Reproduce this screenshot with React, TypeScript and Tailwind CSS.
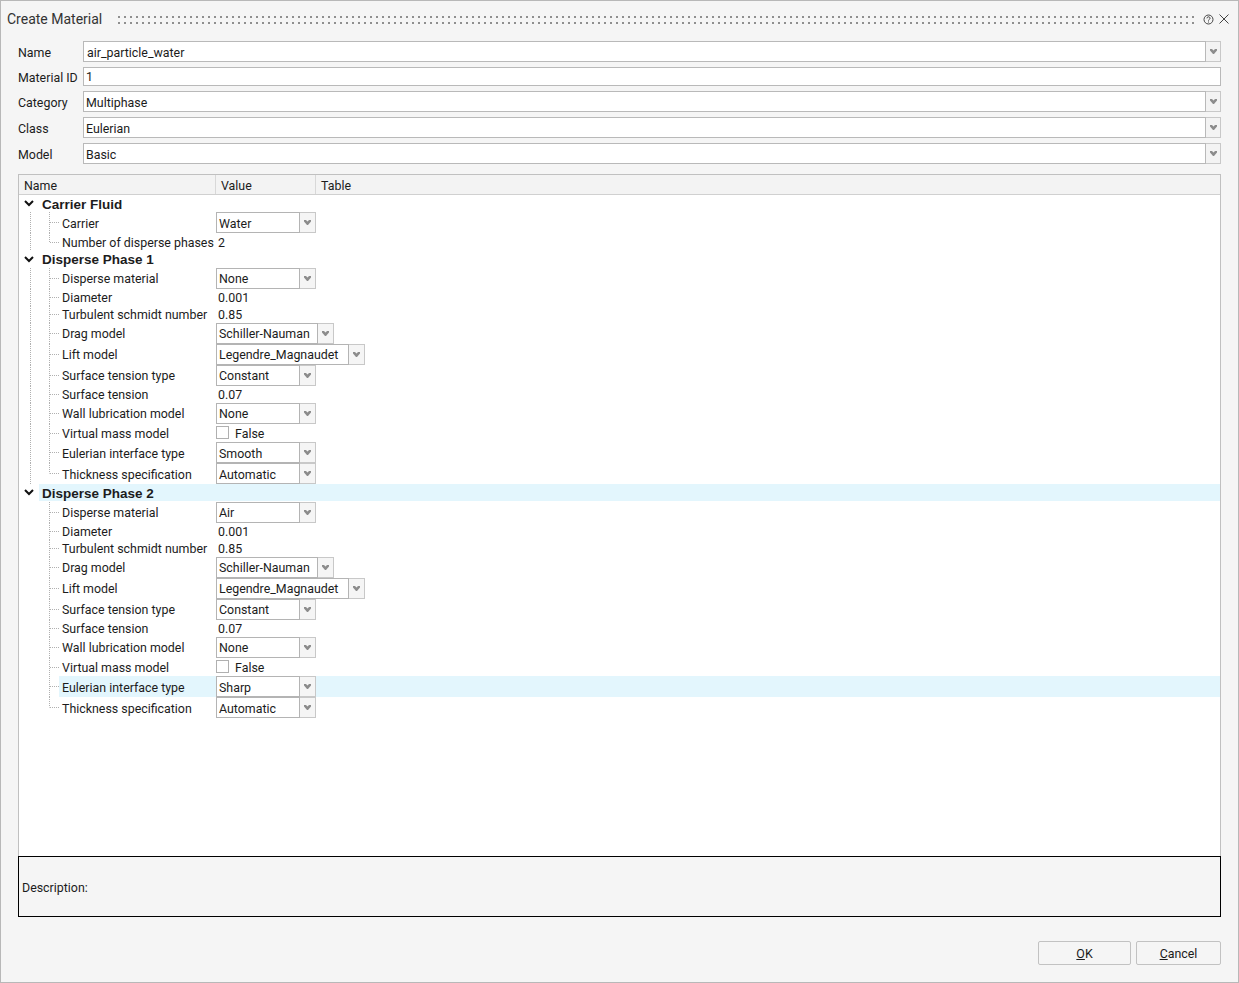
import React from "react";

const font = "font-['Roboto','Liberation_Sans',sans-serif]";

function Arrow() {
  return (
    <svg width="7" height="5" viewBox="0 0 7 5" className="block">
      <path d="M0 0h2l1.5 1.5L5 0h2v1.5L4 5H3L0 1.5z" fill="#8c8c8c" />
    </svg>
  );
}

function FieldCombo({ value, mono }: { value: string; mono?: boolean }) {
  return (
    <div className="flex h-[21px]">
      <div className={`flex-1 border border-[#b9b9b9] bg-white flex items-center pt-[3px] ${mono ? "pl-[3px]" : "pl-[2px]"}`}>{value}</div>
      <div className="w-[15px] border border-l-0 border-[#c8c8c8] bg-[#f3f3f3] flex items-center justify-center"><Arrow /></div>
    </div>
  );
}

function Field({ label, children, className }: { label: string; children: React.ReactNode; className?: string }) {
  return (
    <div className={`flex items-center ${className ?? ""}`}>
      <div className="w-[65px] shrink-0 whitespace-nowrap pt-[3px]">{label}</div>
      <div className="flex-1">{children}</div>
    </div>
  );
}

function Combo({ value, w, nudge }: { value: string; w: number; nudge?: boolean }) {
  return (
    <div className="flex h-[21px]" style={{ width: w }}>
      <div className={`flex-1 border border-[#b4b4b4] bg-white flex items-center pl-[2px] whitespace-nowrap ${nudge ? "pt-[4px]" : "pt-[2px]"}`}>{value}</div>
      <div className="w-[16px] border border-l-0 border-[#c8c8c8] bg-[#f5f5f5] flex items-center justify-center"><Arrow /></div>
    </div>
  );
}

function Chevron() {
  return (
    <svg width="10" height="7" viewBox="0 0 10 7" className="block">
      <path d="M1 1l4 4 4-4" fill="none" stroke="#111" strokeWidth="2" />
    </svg>
  );
}

function Dots({ d }: { d: string }) {
  return <path d={d} stroke="#b0b0b0" strokeWidth="1" strokeDasharray="1 1" fill="none" />;
}

type RowDef =
  | { t: "group"; label: string; hl?: boolean; h?: number; nudge?: boolean }
  | { t: "combo"; label: string; value: string; w?: number; hl?: boolean; spine?: boolean; last?: boolean; nudge?: boolean }
  | { t: "text"; label: string; value: string; h?: number; spine?: boolean; last?: boolean }
  | { t: "check"; label: string; value: string; spine?: boolean; last?: boolean };

function Connector({ h, spine, last }: { h: number; spine?: boolean; last?: boolean }) {
  const mid = Math.floor(h / 2) + 0.5;
  return (
    <svg width="40" height={h} className="block shrink-0">
      {spine && <Dots d={`M11.5 0V${h}`} />}
      <Dots d={`M30.5 0V${last ? mid : h}`} />
      <Dots d={`M31 ${mid}H40`} />
    </svg>
  );
}

function Row({ r }: { r: RowDef }) {
  if (r.t === "group") {
    return (
      <div className="flex items-start" style={{ height: r.h ?? 17 }}>
        <div className="w-[20px] h-[17px] shrink-0 flex justify-end items-center pr-[5px]"><Chevron /></div>
        <div className={`flex-1 h-[17px] flex items-center pl-[3px] font-['Liberation_Sans',sans-serif] font-bold text-[13.5px] ${r.nudge ? "pt-[2px]" : ""} ${r.hl ? "bg-[#e3f6fd]" : ""}`}>{r.label}</div>
      </div>
    );
  }
  const h = r.t === "combo" ? 21 : r.t === "check" ? 18 : r.h ?? 17;
  const hl = r.t === "combo" && r.hl;
  const nudge = r.t === "combo" && r.nudge;
  return (
    <div className="flex items-center" style={{ height: h }}>
      <Connector h={h} spine={r.spine} last={r.last} />
      <div className={`flex flex-1 h-full items-center ${hl ? "bg-[#e3f6fd]" : ""}`}>
        <div className={`w-[157px] shrink-0 pl-[3px] whitespace-nowrap ${nudge ? "pt-[4px]" : "pt-[2px]"}`}>{r.label}</div>
        {r.t === "combo" && <Combo value={r.value} w={r.w ?? 100} nudge={nudge} />}
        {r.t === "text" && <div className="pl-[2px] pt-[2px]">{r.value}</div>}
        {r.t === "check" && (
          <div className="flex items-center">
            <div className="w-[13px] h-[13px] border border-[#b0b0b0] bg-white mb-[2px]" />
            <div className="ml-[6px] pt-[2px]">{r.value}</div>
          </div>
        )}
      </div>
    </div>
  );
}

function phase(hl: boolean, spine: boolean, first: string, type: string): RowDef[] {
  return [
    { t: "combo", label: "Disperse material", value: first, spine },
    { t: "text", label: "Diameter", value: "0.001", spine },
    { t: "text", label: "Turbulent schmidt number", value: "0.85", spine },
    { t: "combo", label: "Drag model", value: "Schiller-Nauman", w: 118, spine },
    { t: "combo", label: "Lift model", value: "Legendre_Magnaudet", w: 149, spine },
    { t: "combo", label: "Surface tension type", value: "Constant", spine },
    { t: "text", label: "Surface tension", value: "0.07", spine },
    { t: "combo", label: "Wall lubrication model", value: "None", spine },
    { t: "check", label: "Virtual mass model", value: "False", spine },
    { t: "combo", label: "Eulerian interface type", value: type, hl, spine, nudge: true },
    { t: "combo", label: "Thickness specification", value: "Automatic", spine, last: true, nudge: true },
  ];
}

const rows: RowDef[] = [
  { t: "group", label: "Carrier Fluid", nudge: true },
  { t: "combo", label: "Carrier", value: "Water", spine: true, nudge: true },
  { t: "text", label: "Number of disperse phases", value: "2", h: 18, spine: true, last: true },
  { t: "group", label: "Disperse Phase 1" },
  ...phase(false, true, "None", "Smooth"),
  { t: "group", label: "Disperse Phase 2", hl: true, h: 18, nudge: true },
  ...phase(true, false, "Air", "Sharp"),
];

export default function App() {
  return (
    <div className={`w-[1239px] h-[983px] border border-[#b8b8b8] bg-[#f5f5f5] text-[#1c1c1c] text-[12.4px] leading-none flex flex-col overflow-hidden ${font}`}>
      <div className="flex items-center h-[36px] pl-[6px] pr-[9px] shrink-0">
        <div className="text-[14px] text-[#333] whitespace-nowrap">Create Material</div>
        <div className="flex-1 ml-[14px] mr-[8px] mt-[2px] h-[12px] bg-[radial-gradient(circle,#8f8f8f_1px,transparent_1.3px)] bg-[length:6px_6px]" />
        <svg width="11" height="11" viewBox="0 0 11 11" className="mr-[5px]">
          <circle cx="5.5" cy="5.5" r="4.5" fill="none" stroke="#444" />
          <path d="M4 4.3a1.5 1.5 0 1 1 2.2 1.3c-.5.3-.7.5-.7 1" fill="none" stroke="#444" />
          <path d="M5 7.6h1v1H5z" fill="#444" />
        </svg>
        <svg width="10" height="10" viewBox="0 0 10 10">
          <path d="M.5.5l9 9M9.5.5l-9 9" stroke="#444" strokeWidth="1" />
        </svg>
      </div>

      <div className="px-[17px] shrink-0 pt-[4px]">
        <Field label="Name"><FieldCombo value="air_particle_water" mono /></Field>
        <Field label="Material ID" className="mt-[5px]">
          <div className="h-[19px] border border-[#b9b9b9] bg-white flex items-center pl-[2px] pt-[2px]">1</div>
        </Field>
        <Field label="Category" className="mt-[5px]"><FieldCombo value="Multiphase" /></Field>
        <Field label="Class" className="mt-[5px]"><FieldCombo value="Eulerian" /></Field>
        <Field label="Model" className="mt-[5px]"><FieldCombo value="Basic" /></Field>
      </div>

      <div className="mx-[17px] mt-[10px] h-[682px] shrink-0 border border-b-0 border-[#c0c0c0] bg-white flex flex-col">
        <div className="flex h-[20px] bg-[#f3f3f3] border-b border-[#d0d0d0] shrink-0 items-center">
          <div className="w-[197px] pl-[5px] pt-[3px] h-full flex items-center border-r border-[#d8d8d8]">Name</div>
          <div className="w-[100px] pl-[5px] pt-[3px] h-full flex items-center border-r border-[#d8d8d8]">Value</div>
          <div className="flex-1 pl-[5px] pt-[3px] h-full flex items-center">Table</div>
        </div>
        {rows.map((r, i) => <Row key={i} r={r} />)}
      </div>

      <div className="mx-[17px] w-[1203px] h-[61px] shrink-0 border border-black flex items-center pl-[3px] pt-[3px]">Description:</div>

      <div className="flex justify-end gap-[5px] pr-[17px] mt-[24px]">
        <button className="w-[93px] h-[24px] border border-[#c2c2c2] rounded-[2px] bg-[#f5f5f5] pt-[2px]"><u>O</u>K</button>
        <button className="w-[85px] h-[24px] border border-[#c2c2c2] rounded-[2px] bg-[#f5f5f5] pt-[2px]"><u>C</u>ancel</button>
      </div>
    </div>
  );
}
